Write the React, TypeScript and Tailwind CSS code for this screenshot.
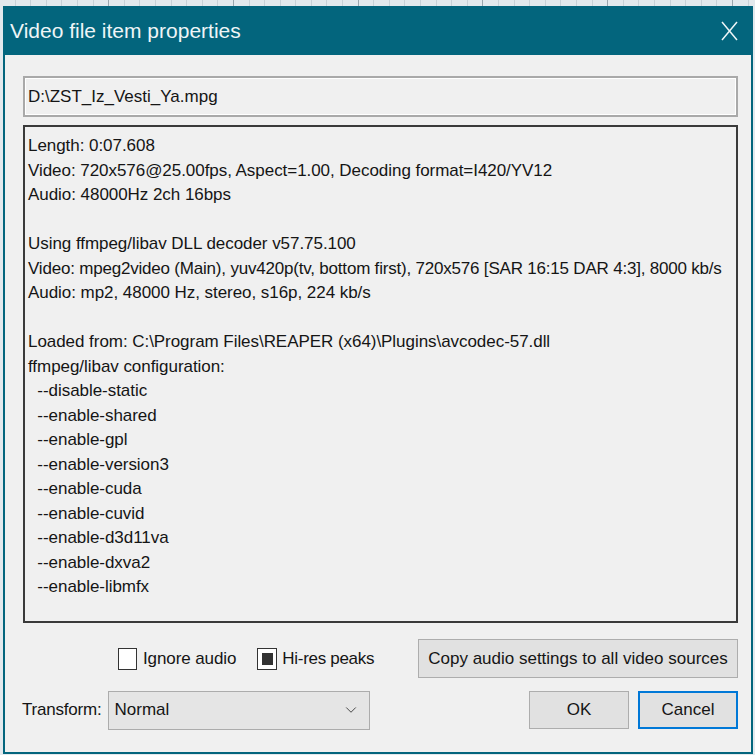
import React from "react";
import { ChevronDown } from "lucide-react";

const lines: string[] = [
  "Length: 0:07.608",
  "Video: 720x576@25.00fps, Aspect=1.00, Decoding format=I420/YV12",
  "Audio: 48000Hz 2ch 16bps",
  "",
  "Using ffmpeg/libav DLL decoder v57.75.100",
  "Video: mpeg2video (Main), yuv420p(tv, bottom first), 720x576 [SAR 16:15 DAR 4:3], 8000 kb/s",
  "Audio: mp2, 48000 Hz, stereo, s16p, 224 kb/s",
  "",
  "Loaded from: C:\\Program Files\\REAPER (x64)\\Plugins\\avcodec-57.dll",
  "ffmpeg/libav configuration:",
  "  --disable-static",
  "  --enable-shared",
  "  --enable-gpl",
  "  --enable-version3",
  "  --enable-cuda",
  "  --enable-cuvid",
  "  --enable-d3d11va",
  "  --enable-dxva2",
  "  --enable-libmfx",
];

export default function App() {
  const cells = Array.from({ length: 48 }, (_, i) => i);
  return (
    <div className="w-[755px] h-[755px] bg-[#e3e9ed] flex flex-col overflow-hidden font-['Liberation_Sans',Arial,sans-serif] text-[#151515]">
      {/* background window strip */}
      <div className="h-[6px] flex shrink-0">
        {cells.map((i) => (
          <div
            key={i}
            className={
              i % 8 === 6
                ? "w-[15.6px] h-full shrink-0 border-r border-[#9aa6ae]"
                : "w-[15.6px] h-full shrink-0 border-r border-[#c9d2d8]"
            }
          />
        ))}
      </div>
      {/* dialog */}
      <div className="flex-1 ml-[3px] mr-[2px] mb-[1px] bg-[#03657d] flex flex-col px-[2px] pb-[2px]">
        <div className="h-[49px] shrink-0 flex items-center justify-between pl-[5px] pr-[13px]">
          <span className="text-[21px] text-[#eef5f7]">Video file item properties</span>
          <svg width="17" height="20" viewBox="0 0 17 20" className="mt-[1px]">
            <path d="M1 1 L16 19 M16 1 L1 19" stroke="#eef5f7" strokeWidth="1.5" fill="none" />
          </svg>
        </div>
        <div className="flex-1 bg-[#f0f0f0] flex flex-col pl-[18px] pr-[13px] pt-[21px] text-[17px]">
          {/* filename */}
          <div className="h-[41px] shrink-0 border-2 border-[#a9a9a9] shadow-[inset_0_0_0_1px_#ffffff] flex items-center pl-[3px] leading-none">
            D:\ZST_Iz_Vesti_Ya.mpg
          </div>
          {/* info */}
          <div className="mt-[8px] h-[498px] shrink-0 border-2 border-[#3a3a3a] pl-[3px] pt-[7px] leading-[24.5px] whitespace-pre overflow-hidden">
            {lines.map((l, i) => (
              <div key={i} className={i === 5 ? "h-[24.5px] tracking-[-0.2px]" : "h-[24.5px] tracking-[-0.05px]"}>
                {l === "" ? "\u00a0" : l}
              </div>
            ))}
          </div>
          {/* checkbox row */}
          <div className="mt-[16px] h-[39px] shrink-0 flex items-center">
            <div className="ml-[95px] flex items-center">
              <div className="w-[19px] h-[22px] border-[1.5px] border-[#333333] bg-white" />
              <span className="ml-[6px] tracking-[-0.1px]">Ignore audio</span>
            </div>
            <div className="ml-[21px] flex items-center">
              <div className="w-[20px] h-[22px] border-[1.5px] border-[#333333] bg-white flex items-center justify-center">
                <div className="w-[11px] h-[12px] bg-[#333333]" />
              </div>
              <span className="ml-[5px] tracking-[-0.3px]">Hi-res peaks</span>
            </div>
            <div className="ml-auto w-[320px] h-[39px] bg-[#e1e1e1] border border-[#adadad] flex items-center justify-center">
              Copy audio settings to all video sources
            </div>
          </div>
          {/* bottom row */}
          <div className="mt-[12px] h-[40px] shrink-0 flex items-center">
            <span className="-ml-[1px] tracking-[-0.2px]">Transform:</span>
            <div className="ml-[6px] w-[262px] h-[39px] bg-[#e5e5e5] border border-[#acacac] flex items-center justify-between pl-[6px] pr-[9px]">
              <span>Normal</span>
              <ChevronDown size={18} strokeWidth={1.3} color="#444444" />
            </div>
            <div className="ml-auto w-[100px] h-[38px] bg-[#e1e1e1] border border-[#adadad] flex items-center justify-center">
              OK
            </div>
            <div className="ml-[9px] w-[100px] h-[38px] bg-[#e1e1e1] border-2 border-[#0078d7] flex items-center justify-center">
              Cancel
            </div>
          </div>
        </div>
      </div>
    </div>
  );
}
